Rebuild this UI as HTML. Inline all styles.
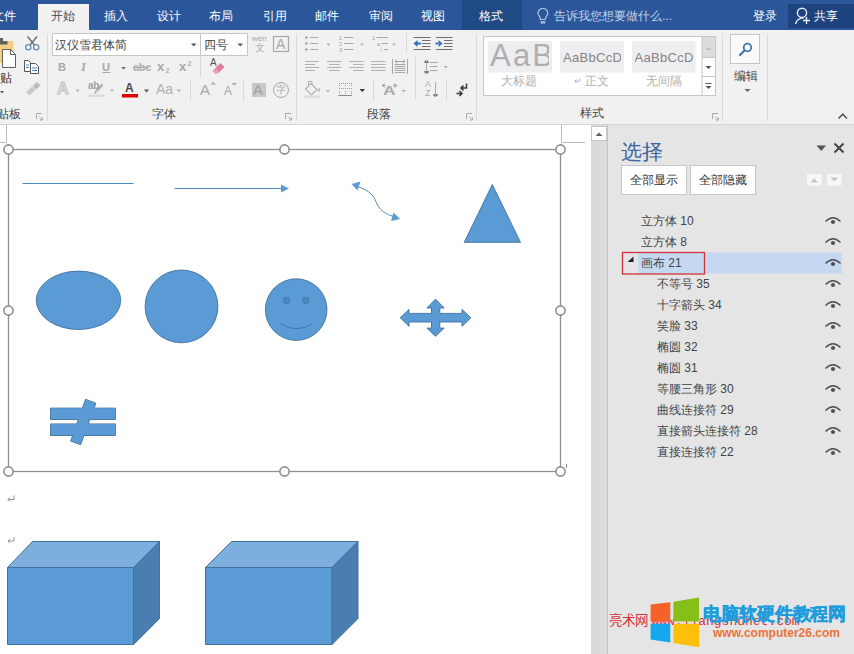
<!DOCTYPE html>
<html><head><meta charset="utf-8">
<style>
*{margin:0;padding:0;box-sizing:border-box}
html,body{width:854px;height:654px;overflow:hidden;background:#fff;font-family:"Liberation Sans",sans-serif}
.a{position:absolute}
#tabs{left:0;top:0;width:854px;height:30px;background:#2b579a}
.tab{position:absolute;top:9px;font-size:12px;line-height:14px;color:#fff;white-space:nowrap;font-weight:500}
#ribbon{left:0;top:30px;width:854px;height:95px;background:#f1f1f1;border-bottom:1px solid #d5d5d5}
#doc{left:0;top:125px;width:591px;height:529px;background:#fff}
#sb{left:591px;top:125px;width:17px;height:529px;background:linear-gradient(90deg,#d9d9d9 0,#d9d9d9 7px,#dbdbdb 7px,#dbdbdb 16px);border-right:1px solid #c4c4c4}
#pane{left:608px;top:125px;width:246px;height:529px;background:#e5e5e5}
.t{position:absolute;white-space:nowrap;font-size:12px;line-height:14px}
.row{position:absolute;font-size:12px;line-height:14px;color:#444;white-space:nowrap}
.eye{position:absolute;left:825px;width:16px;height:8px}
</style></head><body>
<div id="tabs" class="a">
  <div class="a" style="left:38px;top:4px;width:51px;height:26px;background:#f1f1f1"></div>
  <div class="a" style="left:462px;top:0;width:60px;height:30px;background:#1f4a85"></div>
  <div class="tab" style="left:-8px">文件</div>
  <div class="tab" style="left:51px;color:#3e4a5c">开始</div>
  <div class="tab" style="left:104px">插入</div>
  <div class="tab" style="left:157px">设计</div>
  <div class="tab" style="left:209px">布局</div>
  <div class="tab" style="left:263px">引用</div>
  <div class="tab" style="left:315px">邮件</div>
  <div class="tab" style="left:369px">审阅</div>
  <div class="tab" style="left:421px">视图</div>
  <div class="tab" style="left:479px">格式</div>
  <div class="tab" style="left:554px;color:#c5d3e8;font-weight:400">告诉我您想要做什么...</div>
  <div class="tab" style="left:753px">登录</div>
  <div class="a" style="left:788px;top:4px;width:66px;height:24px;background:#1c437d"></div>
  <div class="tab" style="left:814px">共享</div>
</div>
<div id="ribbon" class="a"></div>

<!-- ribbon content -->
<svg class="a" style="left:0;top:0" width="854" height="125" viewBox="0 0 854 125">
  <!-- separators -->
  <g stroke="#dadada" stroke-width="1">
    <line x1="47.5" y1="34" x2="47.5" y2="121"/>
    <line x1="296.5" y1="34" x2="296.5" y2="121"/>
    <line x1="476.5" y1="34" x2="476.5" y2="121"/>
    <line x1="722.5" y1="34" x2="722.5" y2="121"/>
    <line x1="767.5" y1="34" x2="767.5" y2="121"/>
    <line x1="200.5" y1="56" x2="200.5" y2="77"/>
    <line x1="190.5" y1="80" x2="190.5" y2="101"/>
    <line x1="243.5" y1="80" x2="243.5" y2="101"/>
    <line x1="406.5" y1="33" x2="406.5" y2="53"/>
    <line x1="415.5" y1="57" x2="415.5" y2="100"/>
    <line x1="373.5" y1="80" x2="373.5" y2="101"/>
    <line x1="446.5" y1="80" x2="446.5" y2="101"/>
  </g>
  <!-- paste -->
  <path d="M0 41H13.5V63H0Z" fill="#f3cd82"/>
  <path d="M0 38H3V41H7.5V44.5H0Z" fill="#606060"/>
  <path d="M2.5 49.5H10.5L15.5 54.5V67.5H2.5Z" fill="#fff" stroke="#606060" stroke-width="1"/>
  <path d="M10.5 49.5V54.5H15.5" fill="none" stroke="#606060" stroke-width="1"/>
  <path d="M0 91H4L2 93.5Z" fill="#555"/>
  <!-- scissors -->
  <g fill="none" stroke-width="1.3">
    <path d="M27.5 36.5L34.5 45M37 36.5L30 45" stroke="#606870"/>
    <circle cx="28.3" cy="47.3" r="2.6" stroke="#6a8cb0"/><circle cx="36.2" cy="47.3" r="2.6" stroke="#6a8cb0"/>
  </g>
  <!-- copy -->
  <path d="M24.5 60.5H28.5L30.5 62.5V71.5H24.5Z" fill="#fff" stroke="#555" stroke-width="1"/>
  <path d="M30.5 63.5H35.5L38.5 66.5V73.5H30.5Z" fill="#fff" stroke="#555" stroke-width="1"/>
  <path d="M26 65H29M26 67.5H29M32 68H37M32 70.5H37" stroke="#4a80b8" stroke-width="1"/>
  <!-- format painter -->
  <path d="M26 92L32 86.5L35.5 90L29.5 95.5Z" fill="#cacaca"/><path d="M32.5 86L37 82L40.5 85.5L36 89.5Z" fill="#bdbdbd"/>
  <!-- launchers -->
  <g fill="none" stroke="#a8a8a8" stroke-width="1">
    <path d="M36.5 119V113.5H42"/><path d="M39 116.5L42.5 120M42.5 117.5V120H40"/>
    <path d="M285.5 119V113.5H291"/><path d="M288 116.5L291.5 120M291.5 117.5V120H289"/>
    <path d="M466.5 119V113.5H472"/><path d="M469 116.5L472.5 120M472.5 117.5V120H470"/>
    <path d="M712.5 119V113.5H718"/><path d="M715 116.5L718.5 120M718.5 117.5V120H716"/>
  </g>
  <!-- font boxes -->
  <rect x="52.5" y="33.5" width="148" height="22" fill="#fff" stroke="#c6c6c6"/>
  <rect x="200.5" y="33.5" width="47" height="22" fill="#fff" stroke="#c6c6c6"/>
  <path d="M191 43.5H196.5L193.75 46.5Z" fill="#555"/>
  <path d="M237.5 43.5H243L240.25 46.5Z" fill="#555"/>
  <!-- boxed A -->
  <rect x="273.5" y="36.5" width="15" height="15" fill="none" stroke="#a8a8a8" stroke-width="1.2"/>
  <!-- U underline -->
  <line x1="102.5" y1="72.5" x2="110.5" y2="72.5" stroke="#a8a8a8" stroke-width="1"/>
  <path d="M121 67H126L123.5 69.5Z" fill="#666"/>
  <!-- abc strike -->
  <line x1="133" y1="67.5" x2="149.5" y2="67.5" stroke="#a8a8a8" stroke-width="1"/>
  <!-- eraser -->
  <path d="M214.5 69L220.5 63L224.5 67L218.5 73Z" fill="#e47a9c"/>
  <path d="M212.5 71L215.5 68L219 71.5L216 74.5Z" fill="#ec9cb6"/>
  <!-- dropdowns gray -->
  <g fill="#b0b0b0">
    <path d="M75.5 89.5H79.5L77.5 92Z"/><path d="M110 89.5H114L112 92Z"/>
    <path d="M176.5 89.5H181L178.75 92Z"/>
    <path d="M326.5 43.5H330.5L328.5 46Z"/><path d="M360 43.5H364L362 46Z"/><path d="M392 43.5H396L394 46Z"/>
    <path d="M443.5 66H448L445.75 68.5Z"/>
    <path d="M326 90H330L328 92.5Z"/><path d="M401.5 90H406L403.75 92.5Z"/>
  </g>
  <path d="M144 89.5H149L146.5 92.5Z" fill="#555"/>
  <path d="M359.5 89H365L362.25 92Z" fill="#333"/>
  <!-- red A bar -->
  <rect x="122" y="94" width="16" height="3.5" fill="#e00000"/>
  <!-- highlighter -->
  <rect x="88" y="94.5" width="16" height="2.5" fill="#dedede"/>
  <path d="M95.5 90L101.5 83.5L103.5 85.5L97.5 92Z" fill="#b4b4b4"/><path d="M95 90.5L97 92.5L94 94Z" fill="#a8a8a8"/>
  <!-- grow/shrink carets -->
  <path d="M210.5 84.5H216L213.25 82Z" fill="#a8a8a8"/>
  <path d="M231.5 83H237L234.25 85.5Z" fill="#a8a8a8"/>
  <!-- shaded A -->
  <rect x="252" y="83" width="14" height="14" fill="#c9c9c9"/>
  <!-- circled char -->
  <circle cx="281" cy="90" r="7.5" fill="none" stroke="#a8a8a8" stroke-width="1"/>
  <!-- paragraph icons -->
  <g fill="#a0a0a0">
    <rect x="305" y="36.5" width="2.5" height="2"/><rect x="305" y="42.5" width="2.5" height="2"/><rect x="305" y="48.5" width="2.5" height="2"/>
  </g>
  <g stroke="#a8a8a8" stroke-width="1">
    <path d="M310 37.5H318.5M310 43.5H318.5M310 49.5H318.5"/>
    <path d="M344 37.5H353.5M344 43.5H353.5M344 49.5H353.5"/>
    <path d="M376.5 37.5H388M381.5 43.5H388M384 49.5H388"/>
    <!-- align -->
    <path d="M305 61.5H319M305 64.5H315M305 67.5H319M305 70.5H315" stroke="#b0b0b0"/>
    <path d="M327 61.5H341.5M329 64.5H339.5M327 67.5H341.5M329 70.5H339.5" stroke="#b0b0b0"/>
    <path d="M349 61.5H363.5M353 64.5H363.5M349 67.5H363.5M353 70.5H363.5" stroke="#b0b0b0"/>
    <path d="M371 61.5H385.5M371 64.5H385.5M371 67.5H385.5M371 70.5H385.5" stroke="#b0b0b0"/>
    <path d="M392.5 59V74M407.5 59V74M394.5 64.5H405.5M394.5 66.5H405.5M394.5 68.5H405.5M394.5 70.5H405.5M394.5 72.5H405.5" stroke="#a8a8a8"/>
    <path d="M395 61.5H405M395 61.5L397 59.5M395 61.5L397 63.5M405 61.5L403 59.5M405 61.5L403 63.5" stroke="#a0a0a0"/>
    <!-- line spacing -->
    <path d="M426.5 60V74M424 62.5L426.5 60L429 62.5M424 71.5L426.5 74L429 71.5M430 62.5H437.5M430 66.5H437.5M430 70.5H437.5"/>
    <!-- sort -->
    <path d="M435.5 82V97M433 94.5L435.5 97L438 94.5"/>
  </g>
  <g fill="#a0a0a0" font-family="Liberation Sans" font-size="5.5">
    <text x="339" y="39.5">1</text><text x="339" y="45.5">2</text><text x="339" y="51.5">3</text>
    <text x="372" y="39.5">1</text><text x="377" y="45.5">a</text><text x="380.5" y="51.5">i</text>
  </g>
  <!-- indent icons -->
  <g stroke="#707070" stroke-width="1">
    <path d="M413.5 37.5H430.5M422 40.5H430.5M422 43.5H430.5M422 46.5H430.5M413.5 49.5H430.5"/>
    <path d="M436 37.5H452.5M444 40.5H452.5M444 43.5H452.5M444 46.5H452.5M436 49.5H452.5"/>
  </g>
  <path d="M413.5 43.5L417.5 40V47Z M417 42.5H421V44.5H417Z" fill="#2f6fb8"/>
  <path d="M442.5 43.5L438.5 40V47Z M435.5 42.5H439V44.5H435.5Z" fill="#2f6fb8"/>
  <!-- shading -->
  <path d="M305.5 89L311 83.5L317 89.5L311.5 95Z" fill="none" stroke="#b0b0b0" stroke-width="1.1"/>
  <path d="M308.5 86V81.5H312V85" fill="none" stroke="#b0b0b0" stroke-width="1"/>
  <path d="M317 89.5L319.5 92.5L320 88Z" fill="#b5b5b5"/>
  <rect x="304" y="95.5" width="16.5" height="2.5" fill="#dedede"/>
  <!-- borders -->
  <g fill="#9a9a9a">
    <path d="M339 83h1v1h-1zM341 83h1v1h-1zM343 83h1v1h-1zM345 83h1v1h-1zM347 83h1v1h-1zM349 83h1v1h-1zM351 83h1v1h-1z"/>
    <path d="M339 88h1v1h-1zM341 88h1v1h-1zM343 88h1v1h-1zM345 88h1v1h-1zM347 88h1v1h-1zM349 88h1v1h-1zM351 88h1v1h-1z"/>
    <path d="M339 85h1v1h-1zM345 85h1v1h-1zM351 85h1v1h-1zM339 91h1v1h-1zM345 91h1v1h-1zM351 91h1v1h-1zM339 93h1v1h-1zM345 93h1v1h-1zM351 93h1v1h-1z"/>
  </g>
  <line x1="338.5" y1="95.5" x2="352" y2="95.5" stroke="#8a8a8a" stroke-width="1"/>
  <!-- asian layout -->
  <path d="M382 85.5L385 83.5M382 85.5L385 87.5M382 85.5H386M397 85.5L394 83.5M397 85.5L394 87.5M393 85.5H397" fill="none" stroke="#a8a8a8" stroke-width="1"/>
  <!-- show marks -->
  <path d="M466.5 83.5V88H461M463.5 85.5L461 88L463.5 90.5M456.5 93.5H462M459.5 91L462 93.5L459.5 96" fill="none" stroke="#3a3a3a" stroke-width="1.5"/>
  <!-- styles gallery -->
  <rect x="483.5" y="36.5" width="232" height="59" fill="#fff" stroke="#c6c6c6"/>
  <rect x="488" y="41" width="64" height="31.5" fill="#eeedf0"/>
  <rect x="560" y="41" width="64" height="31.5" fill="#eeedf0"/>
  <rect x="632" y="41" width="63.5" height="31.5" fill="#eeedf0"/>
  <rect x="702" y="37" width="13" height="21" fill="#dcdcdc"/>
  <path d="M702 37V95.5M702 57.5H715.5M702 76.5H715.5" fill="none" stroke="#c6c6c6" stroke-width="1"/>
  <path d="M705.5 50H711.5L708.5 47Z" fill="#c0c0c0"/>
  <path d="M705.5 66H711.5L708.5 69Z" fill="#555"/>
  <path d="M705.5 83.5H711.5" stroke="#555" stroke-width="1"/><path d="M705.5 86H711.5L708.5 89Z" fill="#555"/>
  <!-- editing button -->
  <rect x="730.5" y="34.5" width="29" height="29" fill="#fafafa" stroke="#c6c6c6"/>
  <circle cx="747.5" cy="47.5" r="3.8" fill="none" stroke="#3f74ad" stroke-width="1.8"/>
  <path d="M744.5 50.5L740 55" stroke="#3f74ad" stroke-width="2.2" stroke-linecap="round"/>
  <path d="M744.5 89H750.5L747.5 92Z" fill="#666"/>
  <!-- collapse -->
  <path d="M838.5 118.5L842.75 114.25L847 118.5" fill="none" stroke="#555" stroke-width="1.6"/>
</svg>
<div class="t" style="left:-12px;top:71px;color:#333">粘贴</div>
<div class="t" style="left:-15px;top:107px;color:#444">剪贴板</div>
<div class="t" style="left:55px;top:38px;color:#444">汉仪雪君体简</div>
<div class="t" style="left:204px;top:38px;color:#444">四号</div>
<div class="t" style="left:152px;top:107px;color:#444">字体</div>
<div class="t" style="left:367px;top:107px;color:#444">段落</div>
<div class="t" style="left:580px;top:106px;color:#444">样式</div>
<div class="t" style="left:734px;top:69px;color:#444">编辑</div>
<div class="a" style="left:58px;top:61px;font:bold 11px/12px 'Liberation Sans';color:#a8a8a8">B</div>
<div class="a" style="left:81px;top:60px;font:italic bold 13px/13px 'Liberation Serif';color:#a8a8a8">I</div>
<div class="a" style="left:102px;top:61px;font:bold 11px/12px 'Liberation Sans';color:#a8a8a8">U</div>
<div class="a" style="left:133px;top:61px;font:bold 11px/12px 'Liberation Sans';color:#ababab;letter-spacing:-0.3px">abc</div>
<div class="a" style="left:157px;top:60px;font:bold 13px/13px 'Liberation Sans';color:#a8a8a8">x</div><div class="a" style="left:165.5px;top:67px;font:bold 7px/7px 'Liberation Sans';color:#b0b0b0">2</div>
<div class="a" style="left:179px;top:60px;font:bold 13px/13px 'Liberation Sans';color:#a8a8a8">x</div><div class="a" style="left:187.5px;top:60px;font:bold 7px/7px 'Liberation Sans';color:#b0b0b0">2</div>
<div class="a" style="left:210px;top:58px;font:10px/10px 'Liberation Sans';color:#555">A</div>
<div class="a" style="left:252px;top:34px;font:8px/9px 'Liberation Sans';color:#a8a8a8">wén</div>
<div class="a" style="left:255px;top:42px;font:10px/11px 'Liberation Sans';color:#a8a8a8">文</div>
<div class="a" style="left:276px;top:36px;font:14px/16px 'Liberation Sans';color:#a8a8a8">A</div>
<div class="a" style="left:57px;top:81px;font:bold 16px/16px 'Liberation Sans';color:#e4e4e4;-webkit-text-stroke:0.8px #bcbcbc">A</div>
<div class="a" style="left:88px;top:81px;font:bold 10px/10px 'Liberation Sans';color:#a0a0a0;letter-spacing:-0.3px">ab</div>
<div class="a" style="left:125px;top:82px;font:bold 12px/12px 'Liberation Sans';color:#4a4a4a">A</div>
<div class="a" style="left:156px;top:82px;font:14px/14px 'Liberation Sans';color:#b0b0b0">Aa</div>
<div class="a" style="left:200px;top:82px;font:15px/15px 'Liberation Sans';color:#a8a8a8">A</div>
<div class="a" style="left:224px;top:85px;font:12px/12px 'Liberation Sans';color:#a8a8a8">A</div>
<div class="a" style="left:253px;top:82px;font:15px/15px 'Liberation Sans';color:#a0a0a0">A</div>
<div class="a" style="left:276px;top:84px;font:10px/11px 'Liberation Sans';color:#a8a8a8">字</div>
<div class="a" style="left:383px;top:85px;font:bold 12px/12px 'Liberation Sans';color:#a8a8a8;transform:scaleX(1.45);transform-origin:0 0">A</div>
<div class="a" style="left:425px;top:80px;font:9px/9px 'Liberation Sans';color:#a8a8a8">A</div>
<div class="a" style="left:425px;top:89px;font:9px/9px 'Liberation Sans';color:#a8a8a8">Z</div>
<div class="a" style="left:488px;top:36px;width:61px;height:36px;overflow:hidden"><div class="a" style="left:2px;top:4px;font:31px/32px 'Liberation Sans';color:#b0adb2;letter-spacing:2.2px;white-space:nowrap">AaB</div></div>
<div class="a" style="left:563px;top:50px;font:13px/15px 'Liberation Sans';color:#858585;width:58px;overflow:hidden;white-space:nowrap;letter-spacing:0.3px">AaBbCcDd</div>
<div class="a" style="left:634.5px;top:50px;font:13px/15px 'Liberation Sans';color:#858585;width:59px;overflow:hidden;white-space:nowrap;letter-spacing:0.3px">AaBbCcDd</div>
<div class="t" style="left:501px;top:74px;color:#b0b0b0">大标题</div>
<div class="t" style="left:574px;top:74px;color:#b0b0b0;font-size:9px">↵</div>
<div class="t" style="left:585px;top:74px;color:#b0b0b0">正文</div>
<div class="t" style="left:646px;top:74px;color:#b0b0b0">无间隔</div>

<div id="doc" class="a"></div>
<div id="sb" class="a"></div>
<div id="pane" class="a"></div>

<!-- document drawing -->
<svg class="a" style="left:0;top:0" width="607" height="654" viewBox="0 0 607 654">
  <!-- page corner marks -->
  <path d="M0 142.5H6.5V125" fill="none" stroke="#bdbdbd" stroke-width="1"/>
  <path d="M585 142.5H561.5V125" fill="none" stroke="#bdbdbd" stroke-width="1"/>
  <!-- canvas frame -->
  <rect x="8.5" y="149.5" width="552" height="322" fill="none" stroke="#8f8f8f" stroke-width="1.3"/>
  <g fill="#fff" stroke="#8f8f8f" stroke-width="1.6">
    <circle cx="8.5" cy="149.5" r="4.6"/><circle cx="284.5" cy="149.5" r="4.6"/><circle cx="560.5" cy="149.5" r="4.6"/>
    <circle cx="8.5" cy="310.5" r="4.6"/><circle cx="560.5" cy="310.5" r="4.6"/>
    <circle cx="8.5" cy="471.5" r="4.6"/><circle cx="284.5" cy="471.5" r="4.6"/><circle cx="560.5" cy="471.5" r="4.6"/>
  </g>
  <!-- line -->
  <line x1="22.5" y1="183.5" x2="133.5" y2="183.5" stroke="#5189c2" stroke-width="1"/>
  <!-- arrow -->
  <line x1="174.5" y1="188.5" x2="283" y2="188.5" stroke="#5189c2" stroke-width="1"/>
  <path d="M281 184.5L289 188.5L281 192.5Z" fill="#5b9bd5"/>
  <!-- curved double arrow -->
  <path d="M356 186C371 191 374 196 377 204C381 212 388 215 395 217" fill="none" stroke="#5189c2" stroke-width="1"/>
  <path d="M351.5 184L360.5 181.5L357.5 190.5Z" fill="#5b9bd5"/>
  <path d="M400 219L391 221L393.5 212.5Z" fill="#5b9bd5"/>
  <!-- triangle -->
  <path d="M492.3 184.5L520.5 242.3H464.2Z" fill="#5b9bd5" stroke="#41719c" stroke-width="0.9"/>
  <!-- ellipse, circle -->
  <ellipse cx="78.5" cy="300.3" rx="42.2" ry="29.2" fill="#5b9bd5" stroke="#41719c" stroke-width="0.9"/>
  <circle cx="181.5" cy="306.4" r="36.4" fill="#5b9bd5" stroke="#41719c" stroke-width="0.9"/>
  <!-- smiley -->
  <circle cx="296.2" cy="309.6" r="30.8" fill="#5b9bd5" stroke="#41719c" stroke-width="0.9"/>
  <circle cx="286.5" cy="300.4" r="3.4" fill="#4a86c0" stroke="#41719c" stroke-width="0.5"/>
  <circle cx="305.6" cy="300.4" r="3.4" fill="#4a86c0" stroke="#41719c" stroke-width="0.5"/>
  <path d="M280.6 323.9Q296.3 333.5 312 323.9" fill="none" stroke="#41719c" stroke-width="0.9"/>
  <!-- quad arrow -->
  <path d="M400.2 317.8L409 309.4V313.4H431.5V308H426.9L435.5 299.1L444.2 308H439.8V313.4H462V309.4L470.9 317.8L462 326.3V322H439.8V328.1H444.2L435.5 336.3L426.9 328.1H431.5V322H409V326.3Z" fill="#5b9bd5" stroke="#41719c" stroke-width="0.9"/>
  <!-- not equal -->
  <g stroke="#41719c" stroke-width="0.9" fill="#5b9bd5">
  <path d="M50.5 408.1H115.4V419.5H50.5Z M50.5 423.9H115.4V435.5H50.5Z"/>
  <path d="M85.5 399.3L95.9 403.2L80.6 444.8L70.6 441.1Z"/>
  </g>
  <g fill="#5b9bd5">
  <path d="M50.95 408.55H114.95V419.05H50.95Z M50.95 424.35H114.95V435.05H50.95Z"/>
  <path d="M85.8 399.9L95.3 403.4L80.3 444.2L71.2 440.8Z"/>
  </g>
  <!-- paragraph marks -->
  <path d="M14 495.5V499.5H8M10 497.5L8 499.5L10 501.5" fill="none" stroke="#888" stroke-width="0.9"/>
  <path d="M14 537V541H8M10 539L8 541L10 543" fill="none" stroke="#888" stroke-width="0.9"/>
  <!-- cubes -->
  <g stroke="#41719c" stroke-width="1" stroke-linejoin="round">
    <path d="M7.5 567.5L32.5 541.5H159.5L133.5 567.5Z" fill="#7cafde"/>
    <path d="M133.5 567.5L159.5 541.5V618.5L133.5 644.5Z" fill="#4a7eb1"/>
    <path d="M7.5 567.5H133.5V644.5H7.5Z" fill="#5b9bd5"/>
    <path d="M205.5 567.5L231.5 541.5H358L332 567.5Z" fill="#7cafde"/>
    <path d="M332 567.5L358 541.5V618.5L332 644.5Z" fill="#4a7eb1"/>
    <path d="M205.5 567.5H332V644.5H205.5Z" fill="#5b9bd5"/>
  </g>
  <line x1="566.5" y1="464" x2="566.5" y2="468" stroke="#888" stroke-width="1"/>
  <!-- scrollbar up button -->
  <rect x="591.5" y="126.5" width="15" height="14" fill="#fff" stroke="#c6c6c6"/>
  <path d="M595.5 136H602.5L599 132.5Z" fill="#606060"/>
</svg>

<!-- pane content -->
<div class="a" style="left:621px;top:140px;font-size:21px;line-height:24px;color:#3b64a0;white-space:nowrap">选择</div>
<div class="a" style="left:621px;top:165px;width:66px;height:30px;background:#fff;border:1px solid #c6c6c6"></div>
<div class="a" style="left:690px;top:165px;width:66px;height:30px;background:#fff;border:1px solid #c6c6c6"></div>
<div class="row" style="left:630px;top:173px;color:#333">全部显示</div>
<div class="row" style="left:699px;top:173px;color:#333">全部隐藏</div>
<svg class="a" style="left:607px;top:125px" width="247" height="529" viewBox="607 125 247 529">
  <path d="M816.5 145.5H826L821.25 151Z" fill="#555"/>
  <path d="M834.5 143.5L843.5 152.5M843.5 143.5L834.5 152.5" stroke="#444" stroke-width="2"/>
  <rect x="807" y="174" width="14.5" height="11.5" fill="#f7f7f7"/>
  <rect x="827" y="174" width="14.5" height="11.5" fill="#f7f7f7"/>
  <path d="M810.5 182.5H818L814.25 178.5Z" fill="#c3c3c3"/>
  <path d="M830.5 177.5H838L834.25 181.5Z" fill="#c3c3c3"/>
  <!-- highlight row -->
  <rect x="638" y="252.5" width="204" height="21" fill="#c5d8f1"/>
  <rect x="622.5" y="252.5" width="82" height="21.5" fill="none" stroke="#d0343a" stroke-width="1.3"/>
  <path d="M633.5 256.5V262H627.5Z" fill="#222"/>
  <!-- eyes -->
  <g><path d="M825.5 221.5Q833 214 840.5 221.5" fill="none" stroke="#505050" stroke-width="1.3"/><circle cx="833" cy="222" r="2.1" fill="#505050"/><path d="M825.5 242.5Q833 235 840.5 242.5" fill="none" stroke="#505050" stroke-width="1.3"/><circle cx="833" cy="243" r="2.1" fill="#505050"/><path d="M825.5 263.5Q833 256 840.5 263.5" fill="none" stroke="#505050" stroke-width="1.3"/><circle cx="833" cy="264" r="2.1" fill="#505050"/><path d="M825.5 284.5Q833 277 840.5 284.5" fill="none" stroke="#505050" stroke-width="1.3"/><circle cx="833" cy="285" r="2.1" fill="#505050"/><path d="M825.5 305.5Q833 298 840.5 305.5" fill="none" stroke="#505050" stroke-width="1.3"/><circle cx="833" cy="306" r="2.1" fill="#505050"/><path d="M825.5 326.5Q833 319 840.5 326.5" fill="none" stroke="#505050" stroke-width="1.3"/><circle cx="833" cy="327" r="2.1" fill="#505050"/><path d="M825.5 347.5Q833 340 840.5 347.5" fill="none" stroke="#505050" stroke-width="1.3"/><circle cx="833" cy="348" r="2.1" fill="#505050"/><path d="M825.5 368.5Q833 361 840.5 368.5" fill="none" stroke="#505050" stroke-width="1.3"/><circle cx="833" cy="369" r="2.1" fill="#505050"/><path d="M825.5 389.5Q833 382 840.5 389.5" fill="none" stroke="#505050" stroke-width="1.3"/><circle cx="833" cy="390" r="2.1" fill="#505050"/><path d="M825.5 410.5Q833 403 840.5 410.5" fill="none" stroke="#505050" stroke-width="1.3"/><circle cx="833" cy="411" r="2.1" fill="#505050"/><path d="M825.5 431.5Q833 424 840.5 431.5" fill="none" stroke="#505050" stroke-width="1.3"/><circle cx="833" cy="432" r="2.1" fill="#505050"/><path d="M825.5 452.5Q833 445 840.5 452.5" fill="none" stroke="#505050" stroke-width="1.3"/><circle cx="833" cy="453" r="2.1" fill="#505050"/></g>
</svg>
<div class="row" style="left:641px;top:214px">立方体 10</div>
<div class="row" style="left:641px;top:235px">立方体 8</div>
<div class="row" style="left:641px;top:256px">画布 21</div>
<div class="row" style="left:657px;top:277px">不等号 35</div>
<div class="row" style="left:657px;top:298px">十字箭头 34</div>
<div class="row" style="left:657px;top:319px">笑脸 33</div>
<div class="row" style="left:657px;top:340px">椭圆 32</div>
<div class="row" style="left:657px;top:361px">椭圆 31</div>
<div class="row" style="left:657px;top:382px">等腰三角形 30</div>
<div class="row" style="left:657px;top:403px">曲线连接符 29</div>
<div class="row" style="left:657px;top:424px">直接箭头连接符 28</div>
<div class="row" style="left:657px;top:445px">直接连接符 22</div>


<!-- tab bar icons -->
<svg class="a" style="left:0;top:0" width="854" height="30" viewBox="0 0 854 30">
  <path d="M540.5 19.5C540.5 16.5 538 15.5 538 13.2A4.9 4.9 0 0 1 547.8 13.2C547.8 15.5 545.3 16.5 545.3 19.5Z" fill="none" stroke="#a9c3e8" stroke-width="1.2"/>
  <rect x="540.5" y="21.3" width="4.8" height="2.2" fill="#a9c3e8"/>
  <circle cx="802" cy="12.8" r="4.6" fill="none" stroke="#e8eef8" stroke-width="1.4"/>
  <path d="M795.5 24A7.5 7.5 0 0 1 803.5 18" fill="none" stroke="#e8eef8" stroke-width="1.4"/>
  <path d="M806.5 17V24M803 20.5H810" stroke="#e8eef8" stroke-width="1.4"/>
</svg>
<!-- watermark -->
<div class="a" lang="zh-CN" style="left:609px;top:613px;font:13.5px/16px 'Liberation Serif',serif;color:#d8303a;white-space:nowrap">亮术网 <span style="font-family:'Liberation Mono',monospace;font-size:13px">www.liangshunet.com</span></div>
<svg class="a" style="left:640px;top:590px" width="214" height="64" viewBox="640 590 214 64">
  <path d="M650.6 604.6L670.3 602.2V621.4H650.6Z" fill="#f4622a"/>
  <path d="M673.4 601.7L699.1 597.4V621.4H673.4Z" fill="#86bf17"/>
  <path d="M650.6 623.8H670.3V642.5L650.6 639.4Z" fill="#13a9ec"/>
  <path d="M673.4 623.8H699.1V647.3L673.4 643Z" fill="#fdbf0a"/>
</svg>
<div class="a" style="left:703px;top:604px;font:bold 18px/20px 'Liberation Sans',sans-serif;color:#1e9cdc;white-space:nowrap;-webkit-text-stroke:0.5px #1e9cdc;letter-spacing:-0.1px">电脑软硬件教程网</div>
<div class="a" style="left:713px;top:626px;font:bold 12px/15px 'Liberation Sans',sans-serif;color:#ea7438;white-space:nowrap">www.computer26.com</div>

</body></html>
